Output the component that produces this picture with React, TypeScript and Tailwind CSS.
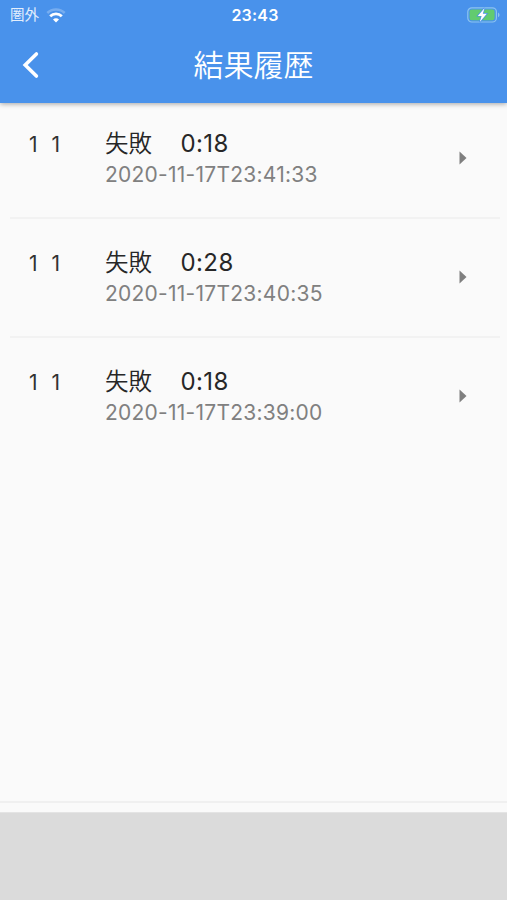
type Result = {
  id: number;
  level: string;
  status: string;
  time: string;
  date: string;
};

const results: Result[] = [
  { id: 3, level: "1 1", status: "失敗", time: "0:18", date: "2020-11-17T23:41:33" },
  { id: 2, level: "1 1", status: "失敗", time: "0:28", date: "2020-11-17T23:40:35" },
  { id: 1, level: "1 1", status: "失敗", time: "0:18", date: "2020-11-17T23:39:00" },
];

function WifiIcon() {
  return (
    <svg width="20" height="15" viewBox="0 0 20 15" fill="none">
      <path d="M1.3 5a12.4 12.4 0 0 1 17.4 0" stroke="#fff" strokeOpacity="0.25" strokeWidth="2.6" />
      <path d="M4.2 8.2a8.2 8.2 0 0 1 11.6 0" stroke="#fff" strokeWidth="2.8" />
      <path d="M10 14.4 7 11.4a4.2 4.2 0 0 1 6 0Z" fill="#fff" />
    </svg>
  );
}

function BatteryIcon() {
  return (
    <svg width="33" height="16" viewBox="0 0 33 16" fill="none">
      <rect x="0.8" y="0.8" width="28.6" height="14.2" rx="4" stroke="#8cc4ef" strokeWidth="1.2" />
      <rect x="2.6" y="2.6" width="25" height="10.6" rx="2.2" fill="#62cb70" />
      <path d="M31 5.5c2 .9 2 3.9 0 4.8Z" fill="#8cc4ef" />
      <path d="M17.6 1 10.8 8.9h3.8l-1.8 6.1 7-8.2h-4Z" fill="#fff" stroke="#4992eb" strokeWidth="1.4" paintOrder="stroke" />
    </svg>
  );
}

function StatusBar() {
  return (
    <div className="grid h-[30px] grid-cols-3 items-center pr-[7px] pl-[10px] text-white">
      <div className="flex items-center gap-[7px]">
        <span className="text-[14.5px] leading-none text-white/85">圏外</span>
        <WifiIcon />
      </div>
      <span className="text-center text-[16px] leading-none font-semibold tracking-[0.2px]">23:43</span>
      <div className="flex justify-end">
        <BatteryIcon />
      </div>
    </div>
  );
}

function Header() {
  return (
    <header className="relative z-10 h-[103px] bg-[#4992eb] shadow-[0_1px_5px_rgba(0,0,0,0.35)]">
      <StatusBar />
      <div className="grid h-[70px] grid-cols-[60px_1fr_60px] items-center">
        <button type="button" aria-label="戻る" className="pl-[21px]">
          <svg width="20" height="28" viewBox="0 0 20 28" fill="none">
            <path d="M15.4 3 4.2 14l11.2 11" stroke="#fff" strokeWidth="3.6" strokeLinecap="round" />
          </svg>
        </button>
        <h1 className="text-center text-[30px] leading-none font-[350] text-white">結果履歴</h1>
      </div>
    </header>
  );
}

function ResultRow({ result }: { result: Result }) {
  return (
    <li className="mr-[7px] ml-[10px] flex h-[119px] border-b-2 border-[#f2f2f2] pl-[19px] last:border-transparent">
      <span className="w-[76px] pt-[30px] text-[21px] leading-[30px] text-[#333] [word-spacing:8px]">
        {result.level}
      </span>
      <div className="flex-1 pt-[28px]">
        <p className="flex gap-[28.5px] text-[23.5px] leading-[31px] text-[#272727]">
          <span className="font-[350]">{result.status}</span>
          <span className="text-[24px] tracking-[0.4px]">{result.time}</span>
        </p>
        <p className="pt-px text-[21px] leading-[30px] tracking-[0.25px] text-[#808080]">{result.date}</p>
      </div>
      <svg width="8" height="14" viewBox="0 0 8 14" className="mt-[51px] mr-[33px]">
        <path d="M0.5 0.5 7.5 7 0.5 13.5Z" fill="#7f7f7f" />
      </svg>
    </li>
  );
}

export default function App() {
  return (
    <div className="flex h-[900px] w-full flex-col bg-[#fafafa] font-['Inter','Noto_Sans_CJK_JP',sans-serif]">
      <Header />
      <ul className="-mt-[3px] flex-1">
        {results.map((result) => (
          <ResultRow key={result.id} result={result} />
        ))}
      </ul>
      <div className="h-[11px] border-t-2 border-[#f0f0f0]" />
      {/* Ad banner slot */}
      <div className="h-[88px] border-t border-[#e4e4e4] bg-[#dbdbdb]" />
    </div>
  );
}
